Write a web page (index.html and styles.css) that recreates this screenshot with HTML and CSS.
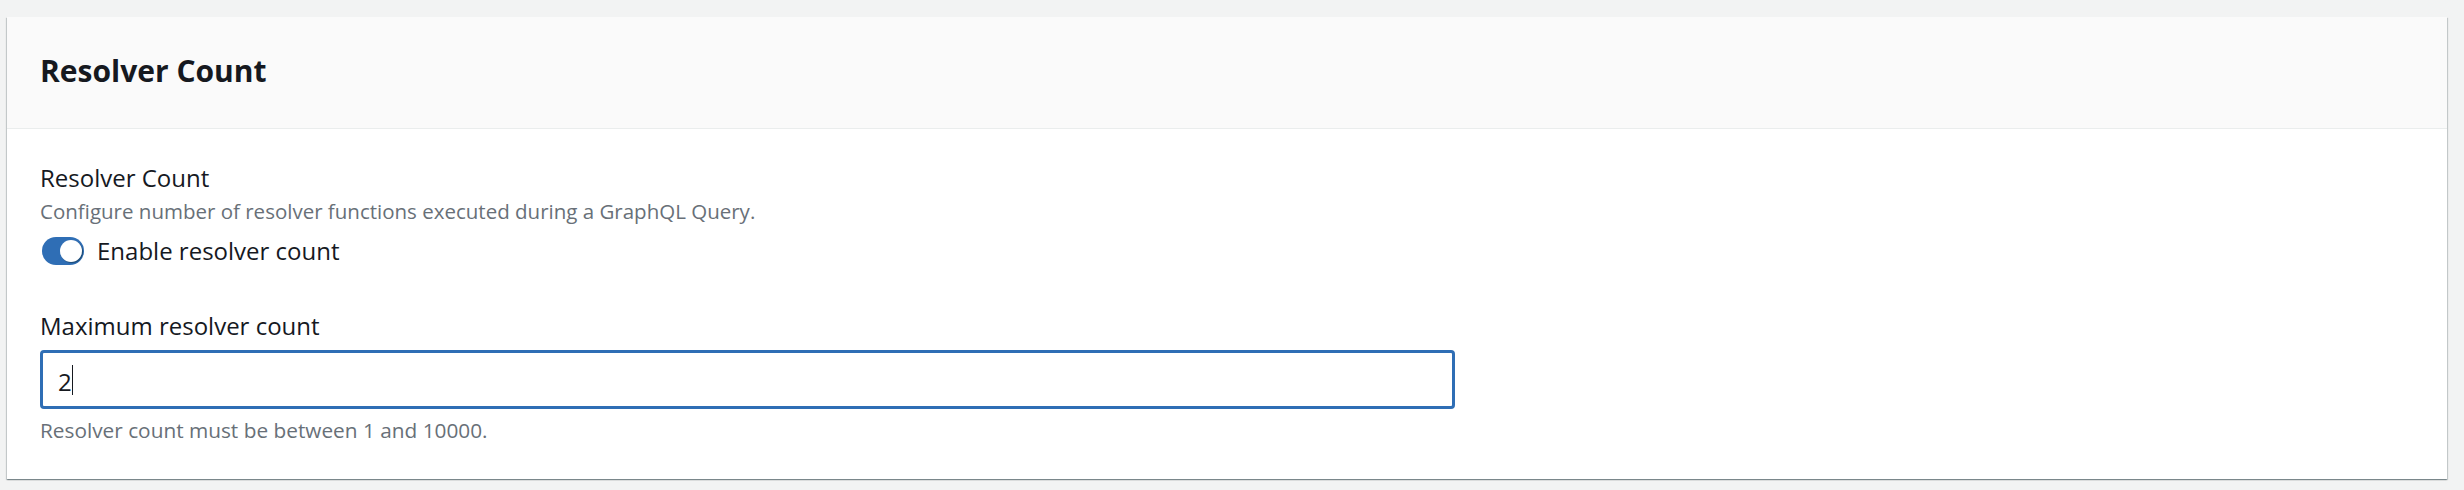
FILE: index.html
```html
<!DOCTYPE html>
<html lang="en">
<head>
<meta charset="utf-8">
<title>Resolver Count</title>
<link rel="stylesheet" href="styles.css">
</head>
<body>
<section class="card">
  <header class="card-header">
    <h2 class="card-title">Resolver Count</h2>
  </header>
  <div class="card-body">
    <div class="field">
      <div class="label">Resolver Count</div>
      <div class="desc">Configure number of resolver functions executed during a GraphQL Query.</div>
      <label class="toggle-row">
        <span class="toggle"><span class="knob"></span></span>
        <span class="toggle-text">Enable resolver count</span>
      </label>
    </div>
    <div class="field field-max">
      <div class="label">Maximum resolver count</div>
      <div class="input"><span class="input-value">2</span><span class="caret"></span></div>
      <div class="hint">Resolver count must be between 1 and 10000.</div>
    </div>
  </div>
</section>
</body>
</html>
```
FILE: styles.css
```css
html, body {
  margin: 0;
  padding: 0;
}
body {
  background: #f2f3f3;
  font-family: "Open Sans", "Noto Sans", sans-serif;
  color: #16191f;
  padding: 17px 17px 11px 7px;
}
.card {
  background: #ffffff;
  box-shadow: 0 1px 1px 0 rgba(0, 28, 36, 0.3), 1px 1px 1px 0 rgba(0, 28, 36, 0.15), -1px 1px 1px 0 rgba(0, 28, 36, 0.15);
}
.card-header {
  background: #fafafa;
  border-bottom: 1px solid #eaeded;
  padding: 34px 33px 37px;
}
.card-title {
  margin: 0;
  font-size: 30px;
  line-height: 40px;
  font-weight: 700;
}
.card-body {
  padding: 37px 33px 39px;
}
.label {
  font-size: 24px;
  line-height: 24px;
}
.desc {
  margin-top: 11px;
  font-size: 20.5px;
  line-height: 20px;
  color: #687078;
}
.toggle-row {
  display: flex;
  align-items: center;
  gap: 13px;
  margin-top: 16px;
  margin-left: 2px;
  height: 28px;
}
.toggle {
  width: 42px;
  height: 28px;
  border-radius: 14px;
  background: #2f6eb5;
  display: flex;
  align-items: center;
  justify-content: flex-end;
  padding-right: 2px;
  box-sizing: border-box;
}
.knob {
  width: 22px;
  height: 22px;
  border-radius: 50%;
  background: #ffffff;
  box-shadow: 1px 1px 1px rgba(0, 28, 36, 0.45);
}
.toggle-text {
  font-size: 24px;
  line-height: 28px;
}
.field-max {
  margin-top: 49px;
}
.input {
  margin-top: 12px;
  width: 1415px;
  height: 59px;
  box-sizing: border-box;
  border: 3px solid #2f6eb5;
  border-radius: 4px;
  display: flex;
  align-items: center;
  padding-left: 15px;
}
.input-value {
  font-size: 24px;
  line-height: 24px;
  margin-top: 4px;
}
.caret {
  width: 1px;
  height: 30px;
  background: #16191f;
}
.hint {
  margin-top: 11px;
  font-size: 20.8px;
  line-height: 20px;
  color: #687078;
}
```
